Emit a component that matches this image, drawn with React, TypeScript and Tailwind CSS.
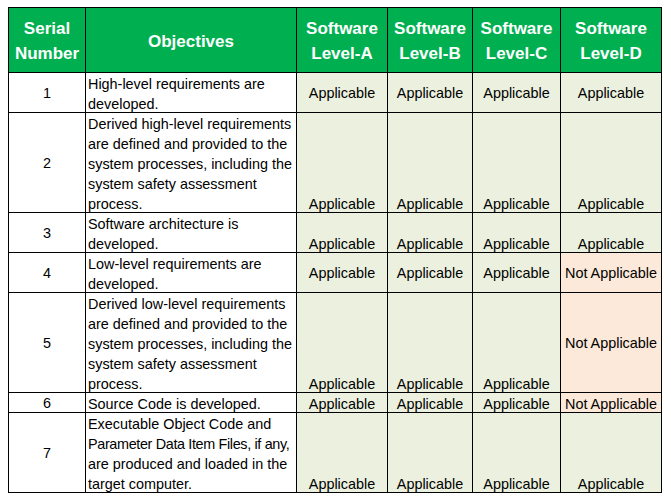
import React from "react";

type Cell = { text: string; na?: boolean; v: "c" | "b" };

const rows: {
  n: string;
  obj: string[];
  h: string;
  cells: Cell[];
}[] = [
  {
    n: "1",
    obj: ["High-level requirements are", "developed."],
    h: "h-[40px]",
    cells: [
      { text: "Applicable", v: "c" },
      { text: "Applicable", v: "c" },
      { text: "Applicable", v: "c" },
      { text: "Applicable", v: "c" },
    ],
  },
  {
    n: "2",
    obj: [
      "Derived high-level requirements",
      "are defined and provided to the",
      "system processes, including the",
      "system safety assessment",
      "process.",
    ],
    h: "h-[100px]",
    cells: [
      { text: "Applicable", v: "b" },
      { text: "Applicable", v: "b" },
      { text: "Applicable", v: "b" },
      { text: "Applicable", v: "b" },
    ],
  },
  {
    n: "3",
    obj: ["Software architecture is", "developed."],
    h: "h-[40px]",
    cells: [
      { text: "Applicable", v: "b" },
      { text: "Applicable", v: "b" },
      { text: "Applicable", v: "b" },
      { text: "Applicable", v: "b" },
    ],
  },
  {
    n: "4",
    obj: ["Low-level requirements are", "developed."],
    h: "h-[40px]",
    cells: [
      { text: "Applicable", v: "c" },
      { text: "Applicable", v: "c" },
      { text: "Applicable", v: "c" },
      { text: "Not Applicable", na: true, v: "c" },
    ],
  },
  {
    n: "5",
    obj: [
      "Derived low-level requirements",
      "are defined and provided to the",
      "system processes, including the",
      "system safety assessment",
      "process.",
    ],
    h: "h-[100px]",
    cells: [
      { text: "Applicable", v: "b" },
      { text: "Applicable", v: "b" },
      { text: "Applicable", v: "b" },
      { text: "Not Applicable", na: true, v: "c" },
    ],
  },
  {
    n: "6",
    obj: ["Source Code is developed."],
    h: "h-[20px]",
    cells: [
      { text: "Applicable", v: "b" },
      { text: "Applicable", v: "b" },
      { text: "Applicable", v: "b" },
      { text: "Not Applicable", na: true, v: "b" },
    ],
  },
  {
    n: "7",
    obj: [
      "Executable Object Code and",
      "Parameter Data Item Files, if any,",
      "are produced and loaded in the",
      "target computer.",
    ],
    h: "h-[80px]",
    cells: [
      { text: "Applicable", v: "b" },
      { text: "Applicable", v: "b" },
      { text: "Applicable", v: "b" },
      { text: "Applicable", v: "b" },
    ],
  },
];

const widths = ["w-[91px]", "w-[85px]", "w-[88px]", "w-[101px]"];
const heads = [
  ["Software", "Level-A"],
  ["Software", "Level-B"],
  ["Software", "Level-C"],
  ["Software", "Level-D"],
];

export default function App() {
  return (
    <div
      className="w-[671px] h-[503px] bg-white pt-[7px] pl-[8px] text-black"
      style={{ fontFamily: '"Liberation Sans", Arial, sans-serif' }}
    >
      <div className="inline-flex flex-col border-l border-t border-black">
        <div className="flex h-[65px] bg-[#00b050] text-white font-bold text-[17px] leading-[25px]">
          <div className="w-[77px] flex flex-col items-center justify-center border-r border-b border-black">
            <span className="translate-y-[1px]">Serial</span>
            <span className="translate-y-[1px]">Number</span>
          </div>
          <div className="w-[211px] flex items-center justify-center border-r border-b border-black">
            <span className="translate-y-[1px]">Objectives</span>
          </div>
          {heads.map((h, i) => (
            <div
              key={i}
              className={`${widths[i]} flex flex-col items-center justify-center border-r border-b border-black whitespace-nowrap`}
            >
              <span className="translate-y-[1px]">{h[0]}</span>
              <span className="translate-y-[1px]">{h[1]}</span>
            </div>
          ))}
        </div>
        {rows.map((r) => (
          <div key={r.n} className={`flex ${r.h} text-[14.4px] leading-[20px]`}>
            <div className="w-[77px] flex items-center justify-center border-r border-b border-black bg-white">
              <span>{r.n}</span>
            </div>
            <div className="w-[211px] flex flex-col justify-end pl-[2px] border-r border-b border-black bg-white">
              {r.obj.map((l, i) => (
                <span
                  key={i}
                  className={`whitespace-nowrap translate-y-[2px] ${
                    l.length > 32 ? "tracking-[-0.35px]" : ""
                  }`}
                >
                  {l}
                </span>
              ))}
            </div>
            {r.cells.map((c, i) => (
              <div
                key={i}
                className={`${widths[i]} flex justify-center ${
                  c.v === "c" ? "items-center" : "items-end"
                } border-r border-b border-black whitespace-nowrap ${
                  c.na ? "bg-[#fde9d9]" : "bg-[#ebf1de]"
                }`}
              >
                <span className={c.v === "b" ? "translate-y-[2px]" : ""}>
                  {c.text}
                </span>
              </div>
            ))}
          </div>
        ))}
      </div>
    </div>
  );
}
